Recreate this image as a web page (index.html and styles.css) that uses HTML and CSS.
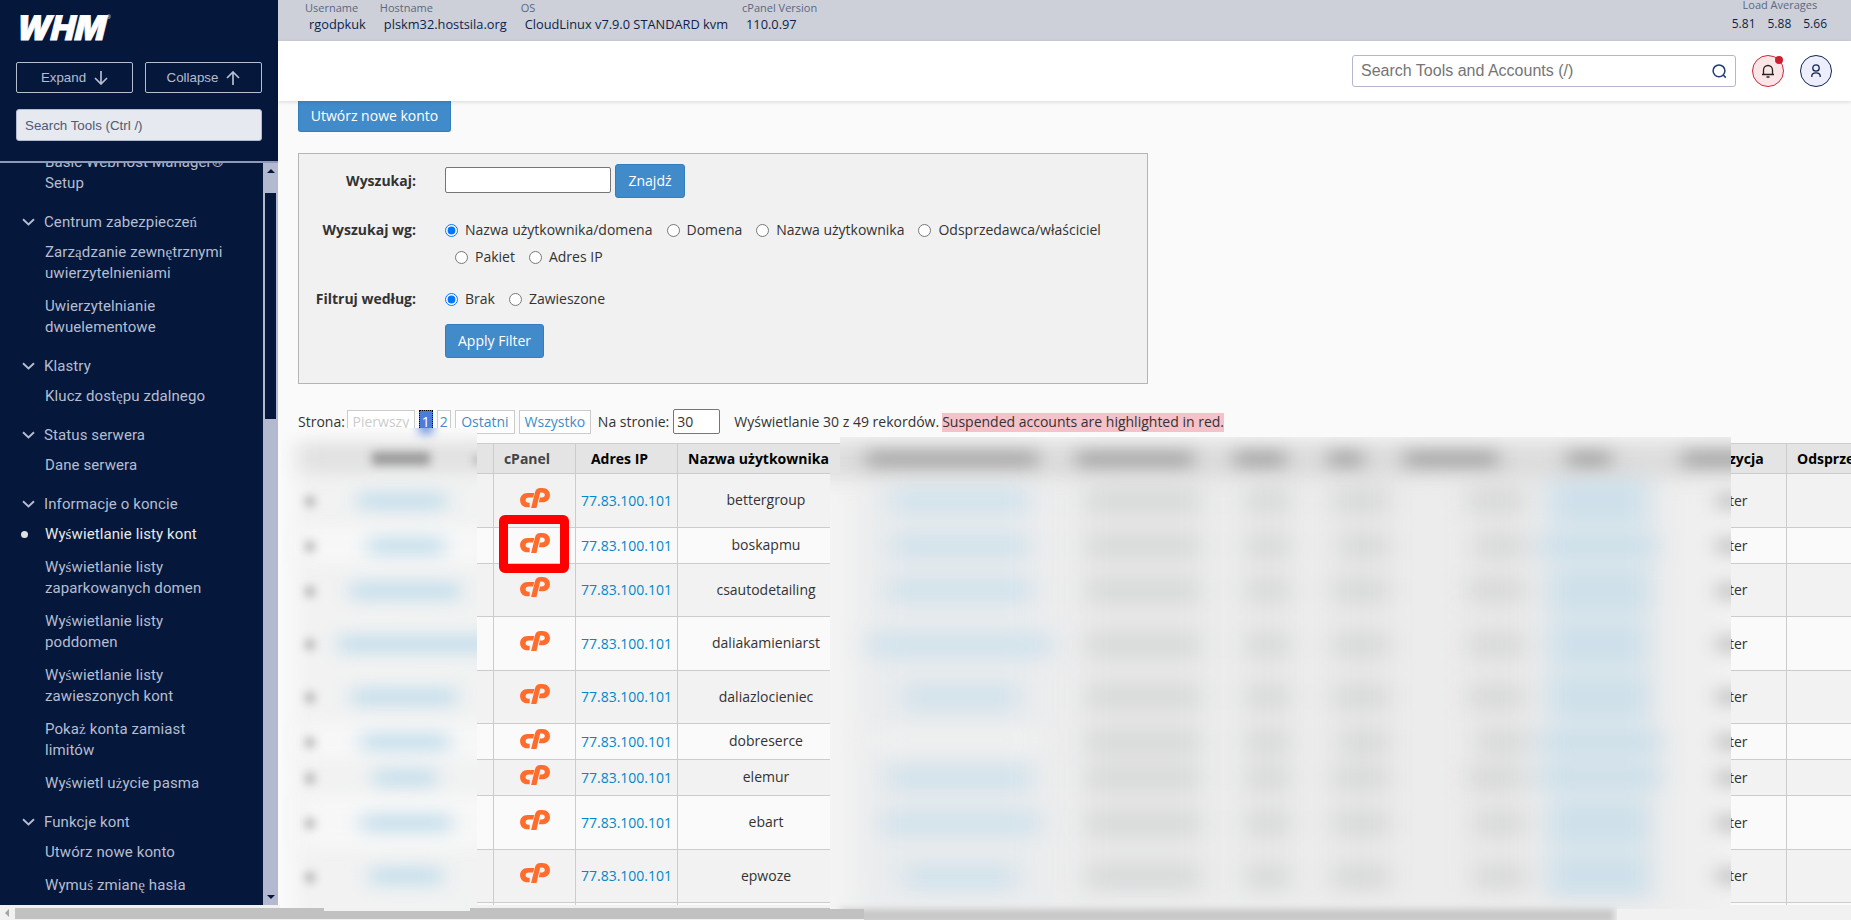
FILE: index.html
```
<!doctype html>
<html lang="pl">
<head>
    <meta charset="UTF-8">
    <title>WHM</title>
    <link rel="stylesheet" href="styles.css">
</head>
<body>
<svg width="0" height="0" class="defs">
    <symbol id="cp" viewBox="0 0 27 20" preserveAspectRatio="none">
        <path d="M7 5H13L11.6 9.6H7.6C4.2 9.6 4.2 14.8 7.6 14.8H8.7V19.3H6.8C-2.2 19.3-2.2 5 7 5Z"/>
        <path d="M10 20L13.6 3.9Q14.5 0 18.3 0H20C29.3 0 29.3 14.3 20 14.3H16.9L18 9.6H19.6C23.2 9.6 23.2 4.6 19.6 4.6H18.2L14.8 20Z"/>
    </symbol>
    <symbol id="chev" viewBox="0 0 13 8"><path d="M1 1.2L6.5 6.4L12 1.2"/></symbol>
</svg>
<div class="page">
    <div class="side">
        <div class="side-top">
            <svg class="logo" width="98" height="28" viewBox="0 0 98 28">
                <text x="2" y="26.500" textLength="89" lengthAdjust="spacingAndGlyphs" transform="skewX(-5)">WHM</text>
                <text class="reg" x="91" y="6">®</text>
            </svg>
            <div class="btns">
                <button class="side-btn">Expand <svg width="14" height="14" viewBox="0 0 14 14"><path d="M7 0V13M1 7L7 13L13 7"/></svg></button>
                <button class="side-btn">Collapse <svg width="14" height="14" viewBox="0 0 14 14"><path d="M7 14V1M1 7L7 1L13 7"/></svg></button>
            </div>
            <input class="side-search" placeholder="Search Tools (Ctrl /)">
        </div>
        <div class="side-body">
            <div class="menu">
                <div class="item">Basic WebHost Manager® Setup</div>
                <div class="cat"><svg><use href="#chev"/></svg>Centrum zabezpiecze<span class="ext">ń</span></div>
                <div class="item">Zarz<span class="ext">ą</span>dzanie zewn<span class="ext">ę</span>trznymi uwierzytelnieniami</div>
                <div class="item">Uwierzytelnianie dwuelementowe</div>
                <div class="cat"><svg><use href="#chev"/></svg>Klastry</div>
                <div class="item">Klucz dost<span class="ext">ę</span>pu zdalnego</div>
                <div class="cat"><svg><use href="#chev"/></svg>Status serwera</div>
                <div class="item">Dane serwera</div>
                <div class="cat"><svg><use href="#chev"/></svg>Informacje o koncie</div>
                <div class="item active">Wy<span class="ext">ś</span>wietlanie listy kont</div>
                <div class="item">Wy<span class="ext">ś</span>wietlanie listy zaparkowanych domen</div>
                <div class="item">Wy<span class="ext">ś</span>wietlanie listy<br>poddomen</div>
                <div class="item">Wy<span class="ext">ś</span>wietlanie listy zawieszonych kont</div>
                <div class="item">Poka<span class="ext">ż</span> konta zamiast limitów</div>
                <div class="item">Wy<span class="ext">ś</span>wietl u<span class="ext">ż</span>ycie pasma</div>
                <div class="cat"><svg><use href="#chev"/></svg>Funkcje kont</div>
                <div class="item">Utwórz nowe konto</div>
                <div class="item">Wymu<span class="ext">ś</span> zmian<span class="ext">ę</span> has<span class="ext">ł</span>a</div>
            </div>
            <div class="track">
                <div class="up"></div>
                <div class="thumb"></div>
                <div class="down"></div>
            </div>
        </div>
    </div>
    <div class="main">
        <div class="info">
            <div class="stat"><span>Username</span><b>rgodpkuk</b></div>
            <div class="stat"><span>Hostname</span><b>plskm32.hostsila.org</b></div>
            <div class="stat"><span>OS</span><b>CloudLinux v7.9.0 STANDARD kvm</b></div>
            <div class="stat"><span>cPanel Version</span><b>110.0.97</b></div>
            <div class="load">
                <span>Load Averages</span>
                <div class="load-val"><b>5.81</b><b>5.88</b><b>5.66</b></div>
            </div>
        </div>
        <div class="nav">
            <div class="search">
                <input placeholder="Search Tools and Accounts (/)">
                <svg width="15" height="15" viewBox="0 0 15 15"><circle cx="7" cy="6.800" r="5.900"/><path d="M11.200 11L13.800 13.600"/></svg>
            </div>
            <div class="round bell">
                <svg width="14" height="14" viewBox="0 0 14 14"><path d="M1 10.500H13M2.500 10.500V6A4.500 4.500 0 0 1 11.500 6V10.500M5.500 13H8.500"/></svg>
                <i class="dot"></i>
            </div>
            <div class="round user">
                <svg width="12" height="14" viewBox="0 0 12 14"><circle cx="6" cy="4" r="3.200"/><path d="M1.800 13V12C1.800 7.700 10.200 7.700 10.200 12V13"/></svg>
            </div>
        </div>
        <div class="content">
            <button class="btn create">Utwórz nowe konto</button>
            <div class="filter">
                <div class="row r1">
                    <label class="lbl">Wyszukaj:</label>
                    <input class="txt"><button class="btn find">Znajdź</button>
                </div>
                <div class="row r2">
                    <label class="lbl">Wyszukaj wg:</label>
                    <div class="opts">
                        <label class="opt"><input type="radio" name="by" checked>Nazwa użytkownika/domena</label>
                        <label class="opt"><input type="radio" name="by">Domena</label>
                        <label class="opt"><input type="radio" name="by">Nazwa użytkownika</label>
                        <label class="opt"><input type="radio" name="by">Odsprzedawca/właściciel</label>
                        <label class="opt second"><input type="radio" name="by">Pakiet</label>
                        <label class="opt"><input type="radio" name="by">Adres IP</label>
                    </div>
                </div>
                <div class="row r3">
                    <label class="lbl">Filtruj według:</label>
                    <div class="opts">
                        <label class="opt"><input type="radio" name="f" checked>Brak</label>
                        <label class="opt"><input type="radio" name="f">Zawieszone</label>
                    </div>
                </div>
                <button class="btn apply">Apply Filter</button>
            </div>
            <div class="pager">
                <span>Strona:</span>
                <a class="pg off">Pierwszy</a>
                <a class="pg cur">1</a>
                <a class="pg two">2</a>
                <a class="pg last">Ostatni</a>
                <a class="pg all">Wszystko</a>
                <span class="per">Na stronie:</span>
                <input class="num" value="30">
                <span class="count">Wyświetlanie 30 z 49 rekordów.</span>
                <span class="susp">Suspended accounts are highlighted in red.</span>
            </div>
            <table class="list">
                <colgroup><col class="c1"><col class="c2"><col class="c3"><col class="c4"><col class="c5"><col class="c6"><col class="c7"></colgroup>
                <tr class="head"><th></th><th class="h-cp">cPanel</th><th class="h-ip">Adres IP</th><th class="h-user">Nazwa użytkownika</th><th></th><th class="h-pos">zycja</th><th class="h-own">Odsprze</th></tr>
                <tr class="odd t54"><td></td><td><svg class="cp"><use href="#cp"/></svg></td><td><a>77.83.100.101</a></td><td class="usr">bettergroup</td><td></td><td class="pos">ter</td><td></td></tr>
                <tr class="t36"><td></td><td><svg class="cp"><use href="#cp"/></svg></td><td><a>77.83.100.101</a></td><td class="usr">boskapmu</td><td></td><td class="pos">ter</td><td></td></tr>
                <tr class="odd t53"><td></td><td><svg class="cp"><use href="#cp"/></svg></td><td><a>77.83.100.101</a></td><td class="usr">csautodetailing</td><td></td><td class="pos">ter</td><td></td></tr>
                <tr class="t54"><td></td><td><svg class="cp"><use href="#cp"/></svg></td><td><a>77.83.100.101</a></td><td class="usr">daliakamieniarst</td><td></td><td class="pos">ter</td><td></td></tr>
                <tr class="odd t53"><td></td><td><svg class="cp"><use href="#cp"/></svg></td><td><a>77.83.100.101</a></td><td class="usr">daliazlocieniec</td><td></td><td class="pos">ter</td><td></td></tr>
                <tr class="t36"><td></td><td><svg class="cp"><use href="#cp"/></svg></td><td><a>77.83.100.101</a></td><td class="usr">dobreserce</td><td></td><td class="pos">ter</td><td></td></tr>
                <tr class="odd t36"><td></td><td><svg class="cp"><use href="#cp"/></svg></td><td><a>77.83.100.101</a></td><td class="usr">elemur</td><td></td><td class="pos">ter</td><td></td></tr>
                <tr class="t54"><td></td><td><svg class="cp"><use href="#cp"/></svg></td><td><a>77.83.100.101</a></td><td class="usr">ebart</td><td></td><td class="pos">ter</td><td></td></tr>
                <tr class="odd t53"><td></td><td><svg class="cp"><use href="#cp"/></svg></td><td><a>77.83.100.101</a></td><td class="usr">epwoze</td><td></td><td class="pos">ter</td><td></td></tr>
                <tr class="t36"><td></td><td></td><td></td><td></td><td></td><td></td><td></td></tr>
            </table>
        </div>
    </div>
</div>
<div class="hbar">
    <div class="hleft"></div>
    <div class="hthumb"></div>
</div>
<div class="marker"></div>

<!-- blurred private columns -->
<svg class="blur" width="1851" height="920" viewBox="0 0 1851 920">
    <defs>
        <filter id="b3" color-interpolation-filters="sRGB" filterUnits="userSpaceOnUse" x="0" y="400" width="1851" height="530"><feGaussianBlur stdDeviation="3"/></filter>
        <filter id="b4" color-interpolation-filters="sRGB" filterUnits="userSpaceOnUse" x="0" y="400" width="1851" height="530"><feGaussianBlur stdDeviation="5"/></filter>
        <filter id="b7" color-interpolation-filters="sRGB" filterUnits="userSpaceOnUse" x="0" y="400" width="1851" height="530"><feGaussianBlur stdDeviation="10 8"/></filter>
        <filter id="b12" color-interpolation-filters="sRGB" filterUnits="userSpaceOnUse" x="0" y="380" width="1851" height="560"><feGaussianBlur stdDeviation="12 9"/></filter>
        <linearGradient id="fade"><stop offset="0" stop-color="#fafafa"/><stop offset=".15" stop-color="#f2f2f2"/><stop offset="1" stop-color="#f1f2f2"/></linearGradient>
        <linearGradient id="fade2"><stop offset="0" stop-color="#f4f4f4"/><stop offset=".05" stop-color="#ecedee"/><stop offset=".9" stop-color="#ececec"/><stop offset="1" stop-color="#f1f1f1"/></linearGradient>
        <clipPath id="cl"><path d="M280 428H477V908H470V911H324V908H280Z"/></clipPath>
        <clipPath id="cr"><path d="M840 437H1731V909H1617V920H864V909H830V473H840Z"/></clipPath>
    </defs>
    <g clip-path="url(#cl)">
        <rect x="280" y="428" width="197" height="490" fill="url(#fade)"/>
        <g filter="url(#b7)">
            <rect x="250" y="400" width="240" height="38" fill="#fafafa"/>
            <rect x="300" y="443" width="200" height="30" fill="#e1e1e1"/>
            <rect x="300" y="527" width="200" height="36" fill="#f7f7f7"/>
            <rect x="300" y="723" width="200" height="36" fill="#f7f7f7"/>
            <rect x="300" y="795" width="200" height="54" fill="#f7f7f7"/>
            <g fill="#c6dfec">
                <rect x="358" y="492" width="88" height="18"/>
                <rect x="368" y="537" width="76" height="18"/>
                <rect x="350" y="582" width="110" height="18"/>
                <rect x="338" y="635" width="160" height="18"/>
                <rect x="352" y="688" width="104" height="18"/>
                <rect x="361" y="733" width="88" height="18"/>
                <rect x="374" y="769" width="62" height="18"/>
                <rect x="361" y="814" width="90" height="18"/>
                <rect x="370" y="867" width="72" height="18"/>
            </g>
        </g>
        <g filter="url(#b4)">
            <rect x="419" y="418" width="14" height="16" fill="#6f97e2"/>
            <rect x="372" y="452" width="58" height="13" fill="#999"/>
            <rect x="475" y="458" width="6" height="4" fill="#555"/>
            <g fill="#a0a0a0">
                <rect x="306" y="497" width="8" height="9"/>
                <rect x="306" y="542" width="8" height="9"/>
                <rect x="306" y="587" width="8" height="9"/>
                <rect x="306" y="640" width="8" height="9"/>
                <rect x="306" y="693" width="8" height="9"/>
                <rect x="306" y="738" width="8" height="9"/>
                <rect x="306" y="774" width="8" height="9"/>
                <rect x="306" y="819" width="8" height="9"/>
                <rect x="306" y="873" width="8" height="9"/>
            </g>
        </g>
    </g>
    <g clip-path="url(#cr)">
        <rect x="830" y="437" width="901" height="483" fill="url(#fade2)"/>
        <g filter="url(#b12)">
            <rect x="800" y="400" width="960" height="42" fill="#f2f2f2"/>
            <rect x="800" y="444" width="960" height="34" fill="#dcdcdc"/>
            <rect x="880" y="480" width="152" height="415" fill="#e8ebed"/>
            <rect x="1545" y="478" width="108" height="420" fill="#dde7ec"/>
            <path fill="#e7e7e7" d="M1085 478h118v415h-118zM1245 478h46v415h-46zM1332 478h58v415h-58zM1468 478h60v415h-60z"/>
            <g fill="#d3e3ec">
                <rect x="892" y="488" width="136" height="26"/>
                <rect x="892" y="533" width="136" height="26"/>
                <rect x="888" y="577" width="144" height="26"/>
                <rect x="868" y="632" width="184" height="26"/>
                <rect x="905" y="684" width="112" height="26"/>
                <rect x="888" y="765" width="144" height="26"/>
                <rect x="882" y="810" width="158" height="26"/>
                <rect x="905" y="864" width="110" height="26"/>
            </g>
            <rect x="870" y="729" width="170" height="22" fill="#eff0f0"/>
            <g fill="#cfe0ea">
                <rect x="1552" y="480" width="92" height="42"/>
                <rect x="1538" y="533" width="120" height="26"/>
                <rect x="1550" y="570" width="100" height="42"/>
                <rect x="1552" y="623" width="92" height="42"/>
                <rect x="1550" y="676" width="98" height="42"/>
                <rect x="1538" y="729" width="124" height="26"/>
                <rect x="1538" y="764" width="124" height="26"/>
                <rect x="1550" y="802" width="98" height="42"/>
                <rect x="1550" y="855" width="98" height="42"/>
            </g>
            <g fill="#d9dada">
                <path d="M1086 488h114v26h-114zM1246 488h44v26h-44zM1332 488h58v26h-58zM1467 488h58v26h-58z"/>
                <path d="M1086 533h114v26h-114zM1246 533h44v26h-44zM1340 533h50v26h-50zM1475 533h50v26h-50z"/>
                <path d="M1086 577h114v26h-114zM1246 577h44v26h-44zM1332 577h58v26h-58zM1467 577h58v26h-58z"/>
                <path d="M1086 632h114v26h-114zM1246 632h44v26h-44zM1332 632h58v26h-58zM1467 632h58v26h-58z"/>
                <path d="M1086 684h114v26h-114zM1246 684h44v26h-44zM1332 684h58v26h-58zM1467 684h58v26h-58z"/>
                <path d="M1086 729h114v26h-114zM1246 729h44v26h-44zM1340 729h50v26h-50zM1478 729h50v26h-50z"/>
                <path d="M1086 765h114v26h-114zM1246 765h44v26h-44zM1332 765h58v26h-58zM1467 765h58v26h-58z"/>
                <path d="M1086 810h114v26h-114zM1246 810h44v26h-44zM1332 810h58v26h-58zM1475 810h50v26h-50z"/>
                <path d="M1086 864h114v26h-114zM1246 864h44v26h-44zM1332 864h58v26h-58zM1475 864h50v26h-50z"/>
            </g>
        </g>
        <g filter="url(#b7)">
            <g fill="#a6a6a6">
                <rect x="866" y="451" width="172" height="16"/>
                <rect x="1076" y="451" width="118" height="16"/>
                <rect x="1234" y="451" width="52" height="16"/>
                <rect x="1328" y="451" width="35" height="16"/>
                <rect x="1404" y="451" width="94" height="16"/>
                <rect x="1567" y="451" width="44" height="16"/>
                <rect x="1682" y="451" width="76" height="16"/>
            </g>
            <path fill="#c0c0c0" d="M1717 493h26v16h-26zM1717 538h26v16h-26zM1717 583h26v16h-26zM1717 636h26v16h-26zM1717 689h26v16h-26zM1717 734h26v16h-26zM1717 770h26v16h-26zM1717 815h26v16h-26zM1717 868h26v16h-26z"/>
        </g>
        <rect x="840" y="909" width="774" height="14" fill="#c8c8c8" filter="url(#b3)"/>
    </g>
</svg>
</body>
</html>
```
FILE: styles.css
```
* {
    box-sizing: border-box;
    margin: 0;
    padding: 0;
}

body {
    width: 1851px;
    height: 920px;
    overflow: hidden;
    background: #fafafa;
    font: 14px/20px "Open Sans", sans-serif;
    color: #333;
}

.defs, .blur {
    position: absolute;
    left: 0;
    top: 0;
    pointer-events: none;
}

.page {
    display: flex;
    height: 905px;
    overflow: hidden;
}

/* sidebar */
.side {
    width: 278px;
    flex: none;
    background: #05183b;
    color: #b6bdd1;
}

.side-top {
    height: 163px;
    padding: 13px 16px 0;
    border-bottom: 2px solid #8f98b4;
}

.logo {
    display: block;
    overflow: visible;
}

.logo text {
    font: italic 900 34px Inter, sans-serif;
    fill: #fff;
    stroke: #fff;
    stroke-width: .8;
}

.logo .reg {
    font: 5px "Liberation Sans", sans-serif;
    stroke: none;
}

.btns {
    display: flex;
    gap: 12px;
    margin-top: 21px;
}

.side-btn {
    display: flex;
    align-items: center;
    justify-content: center;
    gap: 8px;
    width: 117px;
    height: 31px;
    border: 1px solid #b6bdd1;
    border-radius: 2px;
    background: none;
    color: #b6bdd1;
    font: 13.33px "Liberation Sans", sans-serif;
}

.side-btn svg {
    fill: none;
    stroke: #b6bdd1;
    stroke-width: 1.7;
}

.side-search {
    display: block;
    width: 246px;
    height: 32px;
    margin-top: 16px;
    padding: 0 8px;
    border: 1px solid #b3bacf;
    border-radius: 3px;
    background: #e6e9f0;
    font: 13.33px "Liberation Sans", sans-serif;
}

.side-search::placeholder {
    color: #4f5a75;
}

.side-body {
    display: flex;
    height: 742px;
    overflow: hidden;
}

.menu {
    width: 263px;
    margin-top: -17px;
    font: 15px/21px Roboto, sans-serif;
    letter-spacing: .1px;
}

.item {
    padding: 6px 35px 6px 45px;
}

.item.active {
    position: relative;
    color: #e8e8e8;
}

.item.active::before {
    content: "";
    position: absolute;
    left: 21px;
    top: 13px;
    width: 7px;
    height: 7px;
    border-radius: 50%;
    background: #e0e0e0;
}

.cat {
    display: flex;
    align-items: center;
    padding: 12px 0 3px 22px;
}

.cat svg {
    width: 13px;
    height: 8px;
    margin: -2px 9px 0 0;
    fill: none;
    stroke: #b6bdd1;
    stroke-width: 1.9;
}

.ext {
    font-family: "Liberation Serif", serif;
}

.track {
    display: flex;
    flex-direction: column;
    align-items: center;
    width: 15px;
    height: 742px;
    background: #b3bacf;
}

.up, .down {
    border: 4px solid transparent;
    border-top: 0;
    border-bottom-color: #05183b;
    margin-top: 6px;
}

.thumb {
    width: 11px;
    height: 226px;
    margin-top: 20px;
    background: #05183b;
}

.down {
    margin: auto 0 6px;
    transform: rotate(180deg);
}

/* top bars */
.main {
    flex: 1;
    min-width: 0;
}

.info {
    display: flex;
    gap: 14px;
    height: 41px;
    padding: 0 24px 0 27px;
    background: #cdd0d8;
    color: #5b6784;
    font-size: 11px;
    line-height: 16px;
}

.info b {
    font-weight: normal;
    color: #0d1f4a;
}

.stat {
    display: flex;
    flex-direction: column;
}

.stat b {
    padding-left: 4px;
    font-size: 12.8px;
}

.load {
    margin-left: auto;
    margin-top: -3px;
    text-align: center;
}

.load-val {
    display: flex;
    gap: 12px;
    margin-top: 3px;
    font-size: 12px;
}

.load > span {
    padding-left: 1px;
}

.nav {
    position: relative;
    display: flex;
    align-items: center;
    justify-content: flex-end;
    gap: 16px;
    height: 60px;
    padding-right: 19px;
    background: #fff;
    box-shadow: 0 1px 4px rgba(0, 0, 0, .14);
}

.search {
    display: flex;
    align-items: center;
    width: 384px;
    height: 32px;
    padding: 0 8px;
    border: 1px solid #b0b8cd;
    border-radius: 3px;
}

.search input {
    flex: 1;
    border: 0;
    font: 16px "Liberation Sans", sans-serif;
}

.search input::placeholder {
    color: #757575;
}

.search svg {
    fill: none;
    stroke: #1f3a77;
    stroke-width: 1.5;
}

.round {
    position: relative;
    display: flex;
    align-items: center;
    justify-content: center;
    width: 32px;
    height: 32px;
    border: 1px solid #13244e;
    border-radius: 50%;
    background: #eceefc;
}

.round svg {
    fill: none;
    stroke: #13244e;
    stroke-width: 1.3;
}

.bell {
    border-color: #d0253a;
    background: #fbe6e7;
}

.bell svg {
    stroke: #222;
}

.dot {
    position: absolute;
    right: 0;
    top: 0;
    width: 8px;
    height: 8px;
    border-radius: 50%;
    background: #cb1f31;
}

/* content */
.content {
    padding-left: 19px;
}

.btn {
    height: 34px;
    padding: 0 12px 1px;
    border: 1px solid #357ebd;
    border-radius: 3px;
    background: #428bca;
    color: #fff;
    font: 14px "Open Sans", sans-serif;
    white-space: nowrap;
}

.create {
    display: block;
    width: 153px;
    height: 31px;
    margin-left: 1px;
    padding: 0 0 1px;
    border-top: 0;
    border-radius: 0 0 3px 3px;
}

.find {
    width: 70px;
}

.filter {
    width: 850px;
    height: 231px;
    margin: 21px 0 0 1px;
    border: 1px solid #b5b5b5;
    background: #f1f1f1;
}

.row {
    display: flex;
}

.lbl {
    width: 117px;
    margin-right: 29px;
    text-align: right;
    font-weight: bold;
}

.r1 {
    align-items: center;
    padding-top: 10px;
}

.txt {
    width: 166px;
    height: 26px;
    margin: 0 4px 2px 0;
    border: 1px solid #767676;
    border-radius: 2px;
    background: #fff;
}

.r2 {
    margin-top: 22px;
}

.opts {
    display: flex;
    flex-wrap: wrap;
    width: 690px;
    row-gap: 7px;
}

.opt {
    display: flex;
    align-items: center;
    margin-right: 14px;
}

.opt input {
    width: 13px;
    height: 13px;
    margin-right: 7px;
}

.second {
    margin-left: 10px;
}

.r3 {
    margin-top: 22px;
}

.apply {
    margin: 15px 0 0 146px;
}

.pager {
    display: flex;
    align-items: center;
    height: 25px;
    margin: 25px 0 0 1px;
    white-space: nowrap;
}

.pg {
    height: 24px;
    margin-left: 4px;
    border: 1px solid #ccc;
    background: #fff;
    line-height: 22px;
    text-align: center;
    color: #428bca;
}

.off {
    width: 68px;
    margin-left: 2px;
    color: #ccc;
}

.cur {
    width: 14px;
    border: 1px dotted #000;
    background: #4a7ddb;
    color: #fff;
}

.two {
    width: 14px;
}

.last {
    width: 60px;
}

.all {
    width: 72px;
}

.per {
    margin: 0 4px 0 7px;
}

.num {
    width: 47px;
    height: 25px;
    padding-left: 3px;
    border: 1px solid #767676;
    border-radius: 2px;
    font: 14px "Open Sans", sans-serif;
    color: #333;
}

.count {
    margin: 0 3px 0 14px;
}

.susp {
    height: 19px;
    margin-top: 1px;
    line-height: 18px;
    background: #f5c2c9;
}

/* accounts table */
.list {
    width: 1690px;
    margin-top: 9px;
    table-layout: fixed;
    border-collapse: collapse;
}

.list th, .list td {
    border: 1px solid #ccc;
    text-align: center;
}

.c1 { width: 196px; }
.c2 { width: 82px; }
.c3 { width: 102px; }
.c4 { width: 177px; }
.c5 { width: 846px; }
.c6 { width: 86px; }

.head {
    height: 30px;
    background: #e4e4e4;
    color: #000;
}

.odd { background: #f2f2f2; }
.t36 { height: 36px; }
.t53 { height: 53px; }
.t54 { height: 54px; }

.list .h-cp {
    padding-right: 15px;
    color: #444;
}

.list .h-ip {
    padding-right: 14px;
}

.list .h-user {
    padding-right: 15px;
    white-space: nowrap;
}

.list .usr {
    padding-bottom: 1px;
}

.list .h-pos, .list .pos {
    padding-left: 28px;
    text-align: left;
}

.list .h-own {
    padding-left: 10px;
    text-align: left;
}

.list a {
    color: #08c;
}

.cp {
    display: block;
    width: 30px;
    height: 20px;
    margin: -6px auto 0;
    fill: #ff6c2c;
}

/* bottom scrollbar */
.hbar {
    display: flex;
    align-items: center;
    height: 15px;
    background: #f1f1f1;
}

.hleft {
    border: 4px solid transparent;
    border-left: 0;
    border-right-color: #a3a3a3;
    margin: 0 6px 0 5px;
}

.hthumb {
    width: 1600px;
    height: 11px;
    margin-top: 1px;
    background: #c1c1c1;
}

.marker {
    position: absolute;
    left: 499px;
    top: 515px;
    width: 70px;
    height: 58px;
    border: 9px solid #f00;
    border-radius: 6px;
}
```
